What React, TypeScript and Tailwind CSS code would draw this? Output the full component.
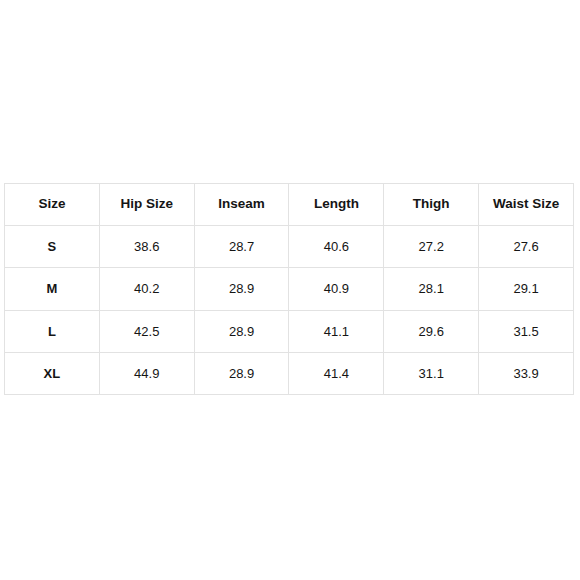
const headers = ["Size", "Hip Size", "Inseam", "Length", "Thigh", "Waist Size"];
const rows = [
  ["S", "38.6", "28.7", "40.6", "27.2", "27.6"],
  ["M", "40.2", "28.9", "40.9", "28.1", "29.1"],
  ["L", "42.5", "28.9", "41.1", "29.6", "31.5"],
  ["XL", "44.9", "28.9", "41.4", "31.1", "33.9"],
];

export default function App() {
  return (
    <div
      className="w-[580px] h-[580px] bg-white pt-[183px] pl-[4px]"
      style={{ fontFamily: '"Liberation Sans", Arial, sans-serif' }}
    >
      <table className="border-collapse w-[570px] table-fixed text-[13px] text-[#151515]">
        <thead>
          <tr>
            {headers.map((h) => (
              <th
                key={h}
                className="border border-[#e2e2e2] h-[42px] p-0 text-center font-bold text-[13.5px]"
              >
                {h}
              </th>
            ))}
          </tr>
        </thead>
        <tbody>
          {rows.map((r, ri) => (
            <tr key={r[0]}>
              {r.map((c, i) => (
                <td
                  key={i}
                  className={`border border-[#e2e2e2] p-0 text-center ${
                    ri === 1 ? "h-[43px]" : "h-[42px]"
                  } ${i === 0 ? "font-bold" : "font-normal"}`}
                >
                  {c}
                </td>
              ))}
            </tr>
          ))}
        </tbody>
      </table>
    </div>
  );
}
